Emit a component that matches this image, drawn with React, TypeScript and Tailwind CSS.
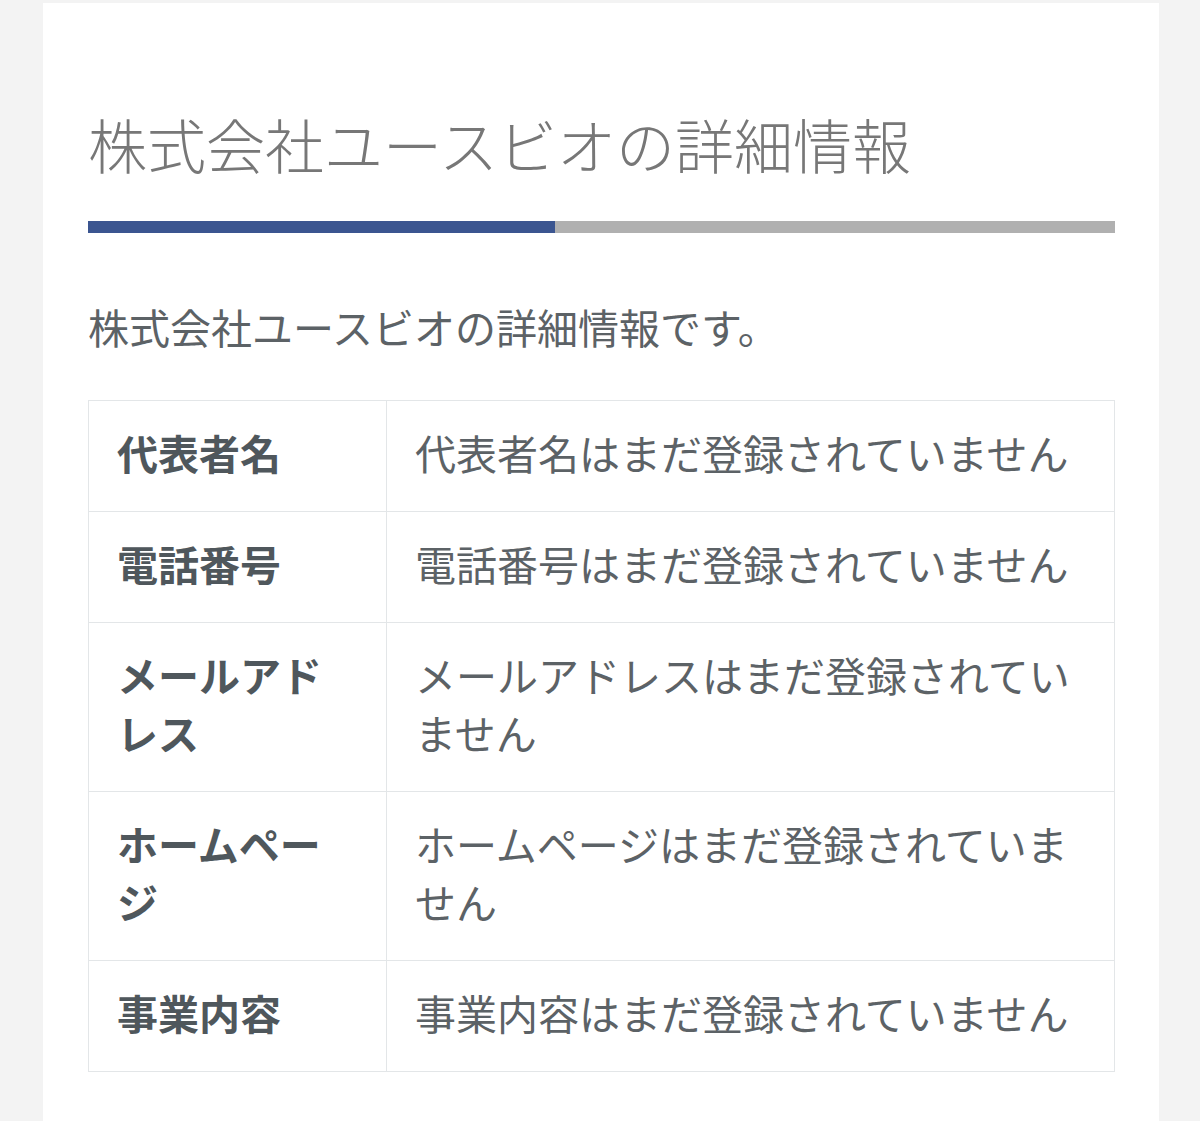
const rows = [
  { label: '代表者名', value: '代表者名はまだ登録されていません' },
  { label: '電話番号', value: '電話番号はまだ登録されていません' },
  { label: 'メールアドレス', value: 'メールアドレスはまだ登録されていません' },
  { label: 'ホームページ', value: 'ホームページはまだ登録されていません' },
  { label: '事業内容', value: '事業内容はまだ登録されていません' },
];

export default function App() {
  return (
    <div
      className="min-h-[1121px] bg-[#f3f3f3] pt-[3px] px-[43px] pr-[41px]"
      style={{ fontFamily: '"Noto Sans CJK JP", "Noto Sans", sans-serif' }}
    >
      <div className="min-h-[1118px] bg-white pl-[45px] pr-[44px] pt-[101px] pb-10">
        {/* heading */}
        <h1 className="text-[59px] leading-[80px] font-light text-[#777777]">
          株式会社ユースビオの詳細情報
        </h1>
        <div className="mt-[37px] flex h-[12px]">
          <div className="w-[467px] bg-[#3b5590]" />
          <div className="flex-1 bg-[#b0b0b0]" />
        </div>

        <p className="mt-[64px] text-[41px] leading-[58px] text-[#5c6266]">
          株式会社ユースビオの詳細情報です。
        </p>

        <table className="mt-[45px] w-full border-collapse border border-[#e3e6e8]">
          <tbody>
            {rows.map((r) => (
              <tr key={r.label}>
                <th className="w-[298px] border border-[#e3e6e8] pl-[28px] pr-[30px] pt-[22px] pb-[30px] text-left align-top text-[41px] leading-[58px] font-bold text-[#4f575c]">
                  {r.label}
                </th>
                <td className="border border-[#e3e6e8] pl-[28px] pr-[30px] pt-[22px] pb-[30px] align-top text-[41px] leading-[58px] text-[#5c6266]">
                  {r.value}
                </td>
              </tr>
            ))}
          </tbody>
        </table>
      </div>
    </div>
  );
}
